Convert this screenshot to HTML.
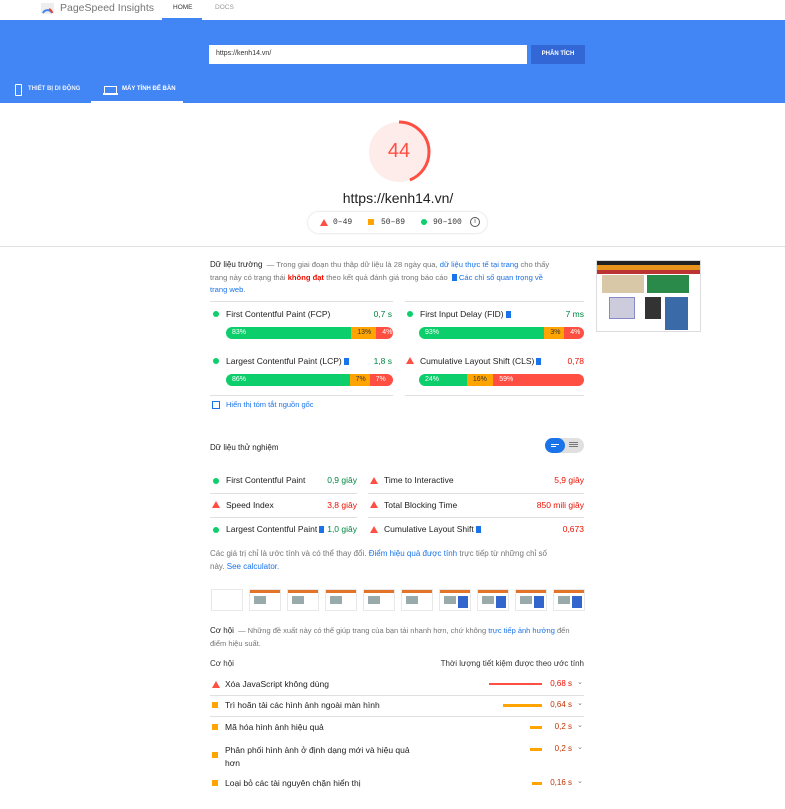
<!DOCTYPE html>
<html><head><meta charset="utf-8"><style>
*{box-sizing:border-box;margin:0;padding:0}
body{width:785px;height:809px;overflow:hidden;background:#fff;font-family:"Liberation Sans","Noto Sans CJK SC",sans-serif;color:#212121;position:relative;font-size:8px}
.a{position:absolute;white-space:nowrap}
.g{color:#0cce6b}.gt{color:#018642}.r{color:#eb0f00}.o{color:#c33300}.b{color:#1a73e8}
.dot{position:absolute;width:6px;height:6px;border-radius:50%;background:#0cce6b}
.tri{position:absolute;width:0;height:0;border-left:4px solid transparent;border-right:4px solid transparent;border-bottom:7px solid #ff4e42}
.sq{position:absolute;width:6px;height:6px;background:#ffa400}
.hr{position:absolute;height:1px;background:#e0e0e0}
.bar{position:absolute;height:12px;border-radius:6px;overflow:hidden;display:flex;font-size:7px;color:#fff;line-height:12px}
.bar div{padding-left:6px}
.bm{display:inline-block;width:5px;height:7px;background:#1a73e8;vertical-align:-1px;margin-left:2px}
.fr{position:absolute;top:589px;width:32px;height:22px;border:1px solid #e8e8e8;background:#fff}
.fr i{position:absolute;left:0;right:0;top:0;height:3px;background:#e37326}
.fr b{position:absolute;left:4px;top:6px;width:12px;height:8px;background:#9aa}
.fr u{position:absolute;left:18px;top:6px;width:10px;height:12px;background:#36c}
</style></head><body>
<svg class="a" style="left:41px;top:3px" width="13" height="11"><rect width="13" height="11" fill="#eee"/><path d="M2 10 A5 5 0 0 1 11 10" stroke="#4285f4" stroke-width="2" fill="none"/><path d="M8 6 A5 5 0 0 1 11 10" stroke="#ea4335" stroke-width="2" fill="none"/></svg>
<div class="a" style="left:60px;top:2px;font-size:10.5px;color:#757575">PageSpeed Insights</div>
<div class="a" style="left:173px;top:4px;font-size:6.5px;color:#333">HOME</div>
<div class="a" style="left:162px;top:18px;width:40px;height:2px;background:#4285f4"></div>
<div class="a" style="left:215px;top:4px;font-size:6.5px;color:#999">DOCS</div>
<div class="a" style="left:0;top:20px;width:785px;height:83px;background:#4285f4"></div>
<div class="a" style="left:209px;top:45px;width:318px;height:19px;background:#fff;font-size:7px;color:#333;padding:5px 0 0 7px">https://kenh14.vn/</div>
<div class="a" style="left:531px;top:45px;width:54px;height:19px;background:#3367d6;color:#fff;font-size:6px;font-weight:bold;text-align:center;line-height:19px">PHÂN TÍCH</div>
<div class="a" style="left:15px;top:84px;width:7px;height:12px;border:1.3px solid #fff;border-radius:1px"></div>
<div class="a" style="left:28px;top:86px;font-size:6px;font-weight:bold;color:#e8efff">THIẾT BỊ DI ĐỘNG</div>
<div class="a" style="left:104px;top:86px;width:13px;height:8px;border:1.3px solid #fff"></div>
<div class="a" style="left:103px;top:93px;width:15px;height:1.5px;background:#fff"></div>
<div class="a" style="left:122px;top:86px;font-size:6px;font-weight:bold;color:#fff">MÁY TÍNH ĐỂ BÀN</div>
<div class="a" style="left:91px;top:101px;width:92px;height:2px;background:#fff"></div>
<svg class="a" style="left:366px;top:119px" width="66" height="66"><circle cx="33" cy="33" r="30" fill="#fdecea"/><circle cx="33" cy="33" r="30" fill="none" stroke="#ff4e42" stroke-width="3" stroke-dasharray="83 200" transform="rotate(-90 33 33)"/></svg>
<div class="a" style="left:366px;top:140px;width:66px;text-align:center;font-size:20px;color:#ff4e42">44</div>
<div class="a" style="left:300px;top:190px;width:196px;text-align:center;font-size:14px;color:#212121">https://kenh14.vn/</div>
<div class="a" style="left:308px;top:212px;width:179px;height:21px;border-radius:11px;box-shadow:0 0 2px #ccc"></div>
<div class="tri" style="left:320px;top:219px"></div>
<div class="a" style="left:333px;top:218px;font-family:'Liberation Mono';font-size:8px;color:#333">0–49</div>
<div class="sq" style="left:368px;top:219px"></div>
<div class="a" style="left:381px;top:218px;font-family:'Liberation Mono';font-size:8px;color:#333">50–89</div>
<div class="dot" style="left:421px;top:219px"></div>
<div class="a" style="left:433px;top:218px;font-family:'Liberation Mono';font-size:8px;color:#333">90–100</div>
<div class="a" style="left:470px;top:217px;width:10px;height:10px;border:1px solid #555;border-radius:50%;font-size:7px;text-align:center;line-height:8px;color:#555">i</div>
<div class="hr" style="left:0;top:246px;width:785px"></div>
<div class="a" style="left:210px;top:259px;line-height:12.5px;white-space:normal;width:350px;color:#757575;font-size:7.6px"><span style="color:#212121;font-size:8px">Dữ liệu trường</span> &nbsp;— Trong giai đoạn thu thập dữ liệu là 28 ngày qua, <span class="b">dữ liệu thực tế tại trang</span> cho thấy trang này có trạng thái <span class="r" style="font-weight:bold">không đạt</span> theo kết quả đánh giá trong báo cáo <span class="bm"></span> <span class="b">Các chỉ số quan trọng về trang web</span>.</div>
<div class="a" style="left:596px;top:260px;width:105px;height:72px;border:1px solid #ddd;background:#fff"></div>
<div class="a" style="left:597px;top:261px;width:103px;height:4px;background:#222"></div>
<div class="a" style="left:597px;top:265px;width:103px;height:5px;background:#e8941a"></div>
<div class="a" style="left:597px;top:270px;width:103px;height:4px;background:#b33"></div>
<div class="a" style="left:602px;top:275px;width:42px;height:18px;background:#d8c8a8"></div>
<div class="a" style="left:647px;top:275px;width:42px;height:18px;background:#2a8a4a"></div>
<div class="a" style="left:609px;top:297px;width:26px;height:22px;background:#ccd;border:1px solid #88c"></div>
<div class="a" style="left:645px;top:297px;width:16px;height:22px;background:#333"></div>
<div class="a" style="left:665px;top:297px;width:23px;height:33px;background:#3a6aa8"></div>
<div class="hr" style="left:210px;top:301px;width:183px"></div>
<div class="hr" style="left:405px;top:301px;width:179px"></div>
<div class="dot" style="left:213px;top:311px"></div>
<div class="a" style="left:226px;top:309px;font-size:8.5px">First Contentful Paint (FCP)</div>
<div class="a gt" style="left:360px;top:309px;width:32px;text-align:right;font-size:8.5px">0,7 s</div>
<div class="bar" style="left:226px;top:327px;width:167px"><div style="width:75%;background:#0cce6b">83%</div><div style="width:15%;background:#ffa400;color:#333">13%</div><div style="width:10%;background:#ff4e42">4%</div></div>
<div class="dot" style="left:407px;top:311px"></div>
<div class="a" style="left:420px;top:309px;font-size:8.5px">First Input Delay (FID)<span class="bm"></span></div>
<div class="a gt" style="left:550px;top:309px;width:34px;text-align:right;font-size:8.5px">7 ms</div>
<div class="bar" style="left:419px;top:327px;width:165px"><div style="width:76%;background:#0cce6b">93%</div><div style="width:12%;background:#ffa400;color:#333">3%</div><div style="width:12%;background:#ff4e42">4%</div></div>
<div class="dot" style="left:213px;top:358px"></div>
<div class="a" style="left:226px;top:356px;font-size:8.5px">Largest Contentful Paint (LCP)<span class="bm"></span></div>
<div class="a gt" style="left:360px;top:356px;width:32px;text-align:right;font-size:8.5px">1,8 s</div>
<div class="bar" style="left:226px;top:374px;width:167px"><div style="width:74%;background:#0cce6b">86%</div><div style="width:12%;background:#ffa400;color:#333">7%</div><div style="width:14%;background:#ff4e42">7%</div></div>
<div class="tri" style="left:406px;top:357px"></div>
<div class="a" style="left:420px;top:356px;font-size:8.5px">Cumulative Layout Shift (CLS)<span class="bm"></span></div>
<div class="a r" style="left:550px;top:356px;width:34px;text-align:right;font-size:8.5px">0,78</div>
<div class="bar" style="left:419px;top:374px;width:165px"><div style="width:29%;background:#0cce6b">24%</div><div style="width:16%;background:#ffa400;color:#333">16%</div><div style="width:55%;background:#ff4e42">59%</div></div>
<div class="hr" style="left:210px;top:395px;width:183px"></div>
<div class="hr" style="left:405px;top:395px;width:179px"></div>
<div class="a" style="left:212px;top:401px;width:8px;height:8px;border:1.3px solid #1a73e8"></div>
<div class="a b" style="left:226px;top:400px;font-size:7.5px">Hiển thị tóm tắt nguồn gốc</div>
<div class="a" style="left:210px;top:443px;font-size:8px">Dữ liệu thử nghiệm</div>
<div class="a" style="left:545px;top:438px;width:39px;height:15px;border-radius:8px;background:#e0e0e0"></div>
<div class="a" style="left:545px;top:438px;width:20px;height:15px;border-radius:8px;background:#1a73e8"></div>
<div class="a" style="left:551px;top:444px;width:8px;height:1px;background:#fff"></div>
<div class="a" style="left:551px;top:446px;width:5px;height:1px;background:#fff"></div>
<div class="a" style="left:569px;top:442px;width:9px;height:1px;background:#777;box-shadow:0 2px #777,0 4px #777"></div>
<div class="dot" style="left:213px;top:478px"></div><div class="a" style="left:226px;top:475px;font-size:8.5px">First Contentful Paint</div><div class="a gt" style="left:320px;top:475px;width:37px;text-align:right;font-size:8.5px">0,9 giây</div>
<div class="tri" style="left:370px;top:477px"></div><div class="a" style="left:384px;top:475px;font-size:8.5px">Time to Interactive</div><div class="a r" style="left:520px;top:475px;width:64px;text-align:right;font-size:8.5px">5,9 giây</div>
<div class="hr" style="left:210px;top:493px;width:147px"></div><div class="hr" style="left:368px;top:493px;width:216px"></div>
<div class="tri" style="left:212px;top:501px"></div><div class="a" style="left:226px;top:500px;font-size:8.5px">Speed Index</div><div class="a r" style="left:320px;top:500px;width:37px;text-align:right;font-size:8.5px">3,8 giây</div>
<div class="tri" style="left:370px;top:501px"></div><div class="a" style="left:384px;top:500px;font-size:8.5px">Total Blocking Time</div><div class="a r" style="left:500px;top:500px;width:84px;text-align:right;font-size:8.5px">850 mili giây</div>
<div class="hr" style="left:210px;top:517px;width:147px"></div><div class="hr" style="left:368px;top:517px;width:216px"></div>
<div class="dot" style="left:213px;top:527px"></div><div class="a" style="left:226px;top:524px;font-size:8.5px">Largest Contentful Paint<span class="bm"></span></div><div class="a gt" style="left:320px;top:524px;width:37px;text-align:right;font-size:8.5px">1,0 giây</div>
<div class="tri" style="left:370px;top:526px"></div><div class="a" style="left:384px;top:524px;font-size:8.5px">Cumulative Layout Shift<span class="bm"></span></div><div class="a r" style="left:520px;top:524px;width:64px;text-align:right;font-size:8.5px">0,673</div>
<div class="a" style="left:210px;top:547px;line-height:13px;white-space:normal;width:350px;color:#757575;font-size:8px">Các giá trị chỉ là ước tính và có thể thay đổi. <span class="b">Điểm hiệu quả được tính</span> trực tiếp từ những chỉ số này. <span class="b">See calculator.</span></div>
<div class="fr" style="left:211px"></div>
<div class="fr" style="left:249px"><i></i><b></b></div>
<div class="fr" style="left:287px"><i></i><b></b></div>
<div class="fr" style="left:325px"><i></i><b></b></div>
<div class="fr" style="left:363px"><i></i><b></b></div>
<div class="fr" style="left:401px"><i></i><b></b></div>
<div class="fr" style="left:439px"><i></i><b></b><u></u></div>
<div class="fr" style="left:477px"><i></i><b></b><u></u></div>
<div class="fr" style="left:515px"><i></i><b></b><u></u></div>
<div class="fr" style="left:553px"><i></i><b></b><u></u></div>
<div class="a" style="left:210px;top:625px;line-height:12.5px;white-space:normal;width:360px;color:#757575;font-size:7.5px"><span style="color:#212121;font-size:8px">Cơ hội</span> &nbsp;— Những đề xuất này có thể giúp trang của bạn tải nhanh hơn, chứ không <span class="b">trực tiếp ảnh hưởng</span> đến điểm hiệu suất.</div>
<div class="a" style="left:210px;top:659px;font-size:8px;color:#333">Cơ hội</div>
<div class="a" style="left:400px;top:659px;width:184px;text-align:right;font-size:8px;color:#333">Thời lượng tiết kiệm được theo ước tính</div>
<div class="tri" style="left:212px;top:681px"></div><div class="a" style="left:225px;top:679px;font-size:8.5px">Xóa JavaScript không dùng</div>
<div class="a" style="left:489px;top:683px;width:53px;height:2px;background:#ff4e42"></div><div class="a r" style="left:540px;top:679px;width:32px;text-align:right;font-size:8px">0,68 s</div>
<div class="hr" style="left:210px;top:695px;width:374px"></div>
<div class="sq" style="left:212px;top:702px"></div><div class="a" style="left:225px;top:700px;font-size:8.5px">Trì hoãn tải các hình ảnh ngoài màn hình</div>
<div class="a" style="left:503px;top:704px;width:39px;height:3px;background:#ffa400"></div><div class="a o" style="left:540px;top:700px;width:32px;text-align:right;font-size:8px">0,64 s</div>
<div class="hr" style="left:210px;top:716px;width:374px"></div>
<div class="sq" style="left:212px;top:724px"></div><div class="a" style="left:225px;top:722px;font-size:8.5px">Mã hóa hình ảnh hiệu quả</div>
<div class="a" style="left:530px;top:726px;width:12px;height:3px;background:#ffa400"></div><div class="a o" style="left:540px;top:722px;width:32px;text-align:right;font-size:8px">0,2 s</div>
<div class="sq" style="left:212px;top:752px"></div><div class="a" style="left:225px;top:744px;font-size:8.5px;line-height:13px">Phân phối hình ảnh ở định dạng mới và hiệu quả<br>hơn</div>
<div class="a" style="left:530px;top:748px;width:12px;height:3px;background:#ffa400"></div><div class="a o" style="left:540px;top:744px;width:32px;text-align:right;font-size:8px">0,2 s</div>
<div class="sq" style="left:212px;top:780px"></div><div class="a" style="left:225px;top:778px;font-size:8.5px">Loại bỏ các tài nguyên chặn hiển thị</div>
<div class="a" style="left:532px;top:782px;width:10px;height:3px;background:#ffa400"></div><div class="a o" style="left:540px;top:778px;width:32px;text-align:right;font-size:8px">0,16 s</div>
<div class="a" style="left:577px;top:678px;font-size:7px;color:#777">⌄</div>
<div class="a" style="left:577px;top:699px;font-size:7px;color:#777">⌄</div>
<div class="a" style="left:577px;top:721px;font-size:7px;color:#777">⌄</div>
<div class="a" style="left:577px;top:743px;font-size:7px;color:#777">⌄</div>
<div class="a" style="left:577px;top:777px;font-size:7px;color:#777">⌄</div>
</body></html>
